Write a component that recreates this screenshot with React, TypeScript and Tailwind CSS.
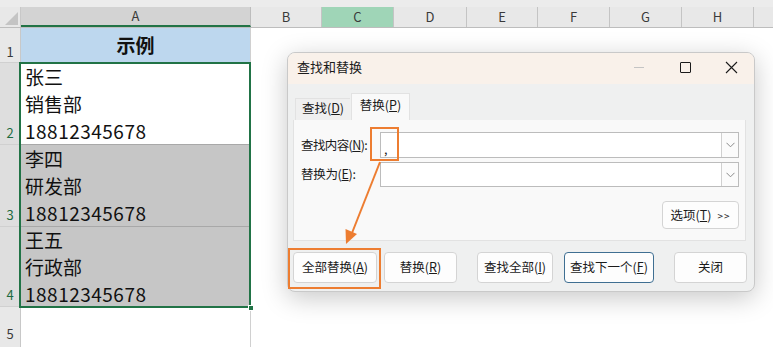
import React from "react";

const font = { fontFamily: '"Noto Sans CJK SC", "Noto Sans", sans-serif' };

const cols = [
  { l: "B", w: "w-[71px]" },
  { l: "C", w: "w-[72px]", sel: true },
  { l: "D", w: "w-[73px]" },
  { l: "E", w: "w-[71px]" },
  { l: "F", w: "w-[72px]" },
  { l: "G", w: "w-[72px]" },
  { l: "H", w: "w-[72px]" },
];

function Btn({
  children,
  w,
  blue,
}: {
  children: React.ReactNode;
  w: string;
  blue?: boolean;
}) {
  return (
    <div
      className={`${w} h-[31px] flex items-center justify-center rounded-[4px] bg-[#fdfdfd] text-[12.5px] text-[#1b1b1b] border ${
        blue ? "border-[#3f6f92]" : "border-[#d4d4d4]"
      }`}
    >
      {children}
    </div>
  );
}

function Chevron() {
  return (
    <div className="w-[17px] h-full border-l border-[#d0d0d0] bg-[#fbfbfb] flex items-center justify-center">
      <svg width="9" height="6" viewBox="0 0 9 6">
        <path d="M0.5 0.8 L4.5 4.8 L8.5 0.8" fill="none" stroke="#8a8a8a" strokeWidth="1" />
      </svg>
    </div>
  );
}

function Cell({ lines, shaded, h }: { lines: string[]; shaded?: boolean; h: string }) {
  return (
    <div
      className={`${h} border-b border-[#a8a8a8] ${
        shaded ? "bg-[#c6c6c6]" : "bg-white"
      } pl-[4px] flex flex-col justify-center text-[19px] leading-[27px] text-[#111]`}
    >
      <div>{lines[0]}</div>
      <div>{lines[1]}</div>
      <div className="tracking-[0.5px]">{lines[2]}</div>
    </div>
  );
}

export default function App() {
  return (
    <div className="relative w-[773px] h-[348px] overflow-hidden bg-white" style={font}>
      {/* top strip */}
      <div className="h-[7px] bg-[#ececec]" />
      {/* column headers */}
      <div className="flex h-[21px] bg-[#e8e8e8] text-[13px] text-[#3a3a3a] border-b border-[#bdbdbd]">
        <div className="w-[21px] h-full relative border-r border-[#c8c8c8]">
          <svg className="absolute right-[2px] bottom-[2px]" width="13" height="13" viewBox="0 0 13 13">
            <path d="M13 0 L13 13 L0 13 Z" fill="#c4c4c4" />
          </svg>
        </div>
        <div className="w-[230px] h-full bg-[#d3d3d3] border-b-2 border-[#217346] border-r border-r-[#bdbdbd] flex items-center justify-center">
          A
        </div>
        {cols.map((c) => (
          <div
            key={c.l}
            className={`${c.w} h-full flex items-center justify-center border-r border-[#c4c4c4] ${
              c.sel ? "bg-[#9fd5b7]" : ""
            }`}
          >
            {c.l}
          </div>
        ))}
        <div className="flex-1" />
      </div>
      {/* body */}
      <div className="flex">
        <div className="w-[21px] bg-[#e8e8e8] border-r border-[#c8c8c8] text-[13px] text-[#3a3a3a] flex flex-col">
          <div className="h-[35px] flex items-end justify-center pb-[1px] border-b border-[#d0d0d0]">1</div>
          <div className="h-[82px] flex items-end justify-center pb-[2px] border-b border-[#d0d0d0] bg-[#dedede] text-[#1e6b41]">2</div>
          <div className="h-[82px] flex items-end justify-center pb-[2px] border-b border-[#d0d0d0] bg-[#dedede] text-[#1e6b41]">3</div>
          <div className="h-[80px] flex items-end justify-center pb-[2px] border-b border-[#d0d0d0] bg-[#dedede] text-[#1e6b41]">4</div>
          <div className="h-[40px] flex items-end justify-center pb-[4px]">5</div>
        </div>
        <div className="w-[230px] flex flex-col border-r border-[#d0d0d0]">
          <div className="h-[35px] bg-[#bdd7ee] border-b border-[#a8a8a8] flex items-center justify-center text-[19px] font-bold text-[#111]">
            示例
          </div>
          <div className="relative">
            <Cell h="h-[82px]" lines={["张三", "销售部", "18812345678"]} />
            <Cell h="h-[82px]" shaded lines={["李四", "研发部", "18812345678"]} />
            <Cell h="h-[80px]" shaded lines={["王五", "行政部", "18812345678"]} />
            <div className="absolute -left-[2px] -top-[1px] -right-[1px] -bottom-[1px] border-2 border-[#217346] pointer-events-none" />
            <div className="absolute -right-[4px] -bottom-[4px] w-[6px] h-[6px] bg-[#217346] border border-white" />
          </div>
        </div>
        <div className="flex-1" />
      </div>

      {/* dialog */}
      <div className="absolute left-[287px] top-[52px] w-[468px] h-[240px] rounded-[8px] border border-[#c9c9c9] bg-[#eff0f0] shadow-[0_6px_26px_rgba(0,0,0,0.22)] overflow-hidden flex flex-col">
        <div className="h-[31px] bg-[#f9f1ea] flex items-center pl-[9px] pb-[3px] text-[13px] text-[#1b1b1b]">
          <div className="flex-1">查找和替换</div>
          <div className="w-[46px] flex justify-center">
            <div className="w-[10px] h-px bg-[#c4c4c4]" />
          </div>
          <div className="w-[46px] flex justify-center">
            <div className="w-[11px] h-[11px] border border-[#1b1b1b] rounded-[1px]" />
          </div>
          <div className="w-[46px] flex justify-center">
            <svg width="13" height="13" viewBox="0 0 13 13">
              <path d="M1 1 L12 12 M12 1 L1 12" stroke="#1b1b1b" strokeWidth="1.1" />
            </svg>
          </div>
        </div>
        {/* tabs */}
        <div className="flex items-end h-[36px] pl-[7px] text-[12.5px] text-[#1b1b1b]">
          <div className="w-[55px] h-[22px] flex items-center justify-center pb-[2px] border-t border-l border-[#e2e2e2] bg-[#efefef]">
            查找(<span className="underline">D</span>)
          </div>
          <div className="w-[59px] h-[27px] ml-[1px] flex items-center justify-center pb-[3px] bg-[#f9f9f9] border border-b-0 border-[#e2e2e2]">
            替换(<span className="underline">P</span>)
          </div>
        </div>
        {/* panel */}
        <div className="ml-[5px] mr-[8px] h-[121px] bg-[#f9f9f9] border border-t-0 border-[#e2e2e2] relative text-[12.5px] text-[#1b1b1b] flex flex-col">
          <div className="flex items-center mt-[12px] h-[26px]">
            <div className="w-[86px] pl-[7px] tracking-[-0.6px] whitespace-nowrap">
              查找内容(<span className="underline">N</span>):
            </div>
            <div className="w-[359px] h-[26px] bg-white border border-[#bcbcbc] flex">
              <div className="flex-1 pl-[3px] leading-[31px]">,</div>
              <Chevron />
            </div>
          </div>
          <div className="flex items-center mt-[4px] h-[25px]">
            <div className="w-[86px] pl-[7px] tracking-[-0.3px] whitespace-nowrap">
              替换为(<span className="underline">E</span>):
            </div>
            <div className="w-[359px] h-[25px] bg-white border border-[#bcbcbc] flex">
              <div className="flex-1" />
              <Chevron />
            </div>
          </div>
          <div className="flex justify-end mt-[14px] pr-[6px]">
            <div className="w-[77px] h-[28px] rounded-[4px] border border-[#d4d4d4] bg-[#fdfdfd] flex items-center justify-center">
              选项(<span className="underline">T</span>)
              <span className="ml-[6px] text-[10px] tracking-[1px]">&gt;&gt;</span>
            </div>
          </div>
        </div>
        {/* buttons */}
        <div className="flex mt-[11px] pl-[5px]">
          <Btn w="w-[84px]">
            全部替换(<span className="underline">A</span>)
          </Btn>
          <div className="w-[7px]" />
          <Btn w="w-[73px]">
            替换(<span className="underline">R</span>)
          </Btn>
          <div className="w-[20px]" />
          <Btn w="w-[76px]">
            查找全部(<span className="underline">I</span>)
          </Btn>
          <div className="w-[11px]" />
          <Btn w="w-[90px]" blue>
            查找下一个(<span className="underline">F</span>)
          </Btn>
          <div className="w-[20px]" />
          <Btn w="w-[73px]">关闭</Btn>
        </div>
      </div>

      {/* orange annotations */}
      <div className="absolute left-[370px] top-[127px] w-[29px] h-[34px] border-2 border-[#ed7d31]" />
      <div className="absolute left-[288px] top-[248px] w-[93px] h-[41px] border-2 border-[#ed7d31]" />
      <svg className="absolute left-0 top-0" width="773" height="348" viewBox="0 0 773 348">
        <path d="M380 162 L352 233" stroke="#ed7d31" strokeWidth="2" fill="none" />
        <path d="M346 244 L345.5 229 L357 234 Z" fill="#ed7d31" />
      </svg>
    </div>
  );
}
